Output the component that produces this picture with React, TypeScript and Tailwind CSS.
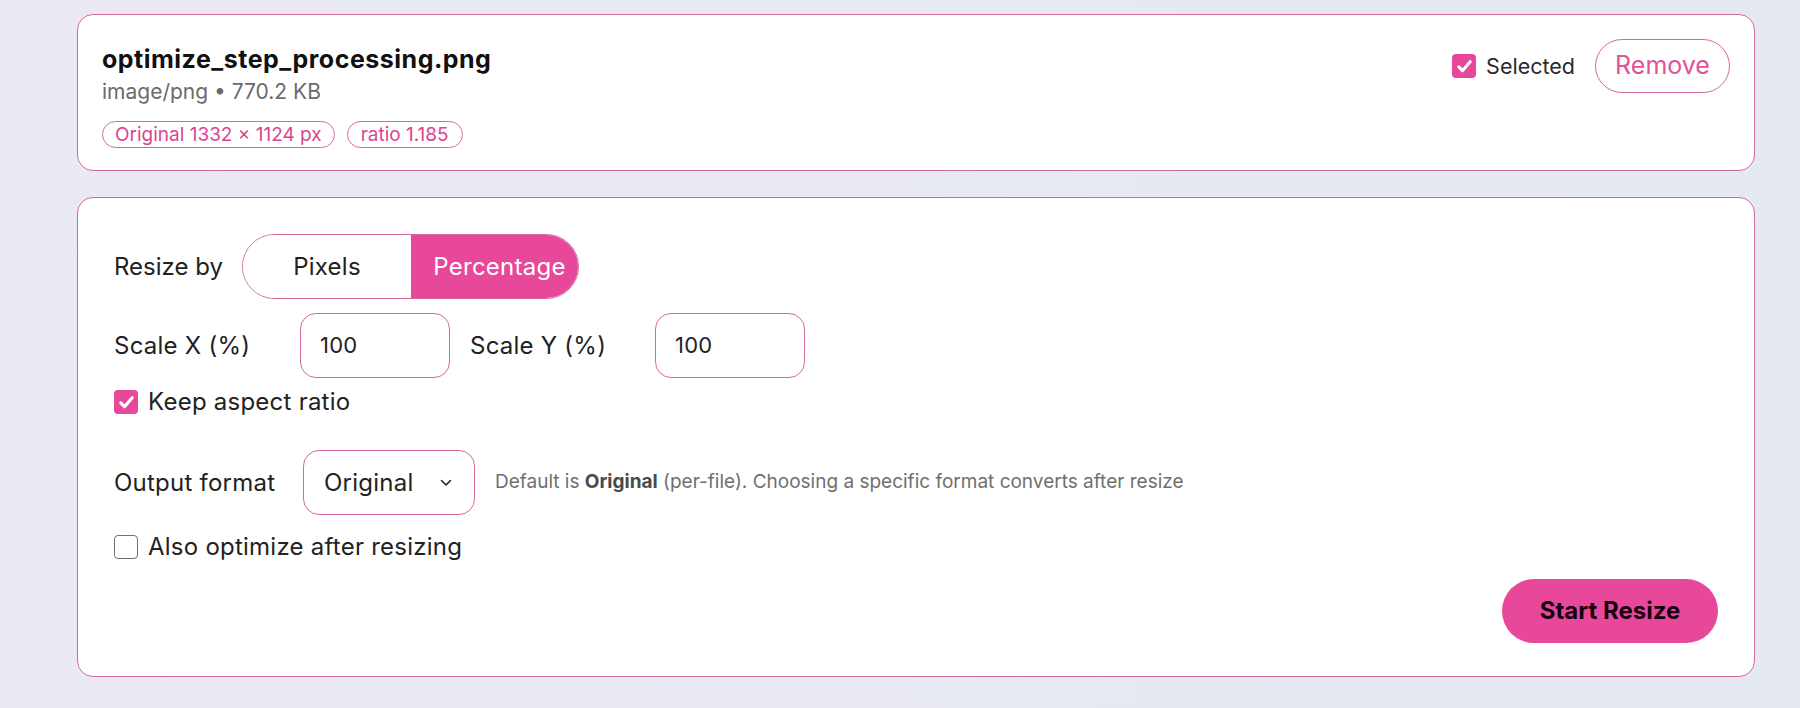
import React from "react";

function CheckedBox() {
  return (
    <span className="flex h-[24px] w-[24px] shrink-0 items-center justify-center rounded-[4px] bg-[#e8489a]">
      <svg viewBox="0 0 24 24" className="h-[21px] w-[21px]" fill="none">
        <path d="M5.5 12.5l4.2 4.3L18.5 6.5" stroke="#ffffff" strokeWidth="3.6" strokeLinecap="round" strokeLinejoin="round" />
      </svg>
    </span>
  );
}

function EmptyBox() {
  return <span className="block h-[24px] w-[24px] shrink-0 rounded-[4px] border-[1.5px] border-[#707070] bg-white" />;
}

export default function App() {
  return (
    <div className="min-h-[708px] w-full bg-linear-to-r from-[#ebe9f3] to-[#e5e9f1] pl-[77px] pr-[45px] pt-[14px] font-['Inter',sans-serif]">
      {/* File card */}
      <div className="flex h-[157px] items-start justify-between rounded-[16px] border border-[#d46ba0] bg-white p-[24px]">
        <div className="flex flex-col">
          <div className="mt-[2px] whitespace-nowrap text-[25px] font-bold leading-[36px] tracking-[0.02em] text-[#111111]">
            optimize_step_processing.png
          </div>
          <div className="whitespace-nowrap text-[21px] leading-[30px] text-[#6b6b6b]">image/png • 770.2 KB</div>
          <div className="mt-[14px] flex gap-[12px]">
            <span className="flex h-[27px] items-center whitespace-nowrap rounded-full border border-[#d46ba0] px-[12px] text-[19px] leading-none text-[#d9468f]">
              Original 1332 × 1124 px
            </span>
            <span className="flex h-[27px] items-center whitespace-nowrap rounded-full border border-[#d46ba0] px-[13px] text-[19px] leading-none text-[#d9468f]">
              ratio 1.185
            </span>
          </div>
        </div>
        <div className="flex items-center">
          <CheckedBox />
          <span className="ml-[10px] whitespace-nowrap text-[21.5px] text-[#2a2a2a]">Selected</span>
          <button className="ml-[20px] flex h-[54px] w-[135px] items-center justify-center rounded-full border border-[#d46ba0] bg-white text-[25px] text-[#df5398]">
            Remove
          </button>
        </div>
      </div>

      {/* Resize options card */}
      <div className="mt-[26px] flex h-[480px] flex-col whitespace-nowrap rounded-[16px] border border-[#d46ba0] bg-white px-[36px] pt-[36px] pb-[35px] text-[24px] tracking-[0.01em] text-[#222222]">
        <div className="flex h-[65px] items-center gap-[19px]">
          <span className="w-[109px] shrink-0 whitespace-nowrap tracking-normal">Resize by</span>
          <div className="flex h-[65px] w-[337px] shrink-0 overflow-hidden rounded-full border border-[#d46ba0]">
            <div className="flex w-[168px] items-center justify-center bg-white text-[#222222]">Pixels</div>
            <div className="flex flex-1 items-center justify-center bg-[#e8489a] pl-[10px] text-white">Percentage</div>
          </div>
        </div>

        <div className="mt-[14px] flex h-[65px] items-center gap-[20px]">
          <span className="w-[166px] shrink-0">Scale X (%)</span>
          <div className="flex h-[65px] w-[150px] shrink-0 items-center rounded-[16px] border border-[#d46ba0] pl-[19px] text-[22px] text-[#222222]">
            100
          </div>
          <span className="w-[165px] shrink-0">Scale Y (%)</span>
          <div className="flex h-[65px] w-[150px] shrink-0 items-center rounded-[16px] border border-[#d46ba0] pl-[19px] text-[22px] text-[#222222]">
            100
          </div>
        </div>

        <div className="mt-[10px] flex h-[28px] items-center gap-[10px]">
          <CheckedBox />
          <span>Keep aspect ratio</span>
        </div>

        <div className="mt-[34px] flex h-[65px] items-center gap-[19px]">
          <span className="w-[170px] shrink-0">Output format</span>
          <div className="flex h-[65px] w-[172px] shrink-0 items-center justify-between rounded-[16px] border border-[#d46ba0] pl-[20px] pr-[22px]">
            <span>Original</span>
            <svg viewBox="0 0 12 8" className="h-[8px] w-[12px]" fill="none">
              <path d="M1.5 1.5L6 6l4.5-4.5" stroke="#222222" strokeWidth="1.6" strokeLinecap="round" strokeLinejoin="round" />
            </svg>
          </div>
          <span className="ml-[1px] text-[19px] tracking-normal text-[#6f6f6f]">
            Default is <b className="font-bold text-[#4a4a4a]">Original</b> (per-file). Choosing a specific format converts after resize
          </span>
        </div>

        <div className="mt-[18px] flex h-[28px] items-center gap-[10px]">
          <EmptyBox />
          <span>Also optimize after resizing</span>
        </div>

        <div className="mt-[18px] flex justify-end">
          <button className="flex h-[64px] w-[216px] items-center justify-center rounded-full bg-[#e8489a] text-[24px] font-bold tracking-normal text-[#150010]">
            Start Resize
          </button>
        </div>
      </div>
    </div>
  );
}
